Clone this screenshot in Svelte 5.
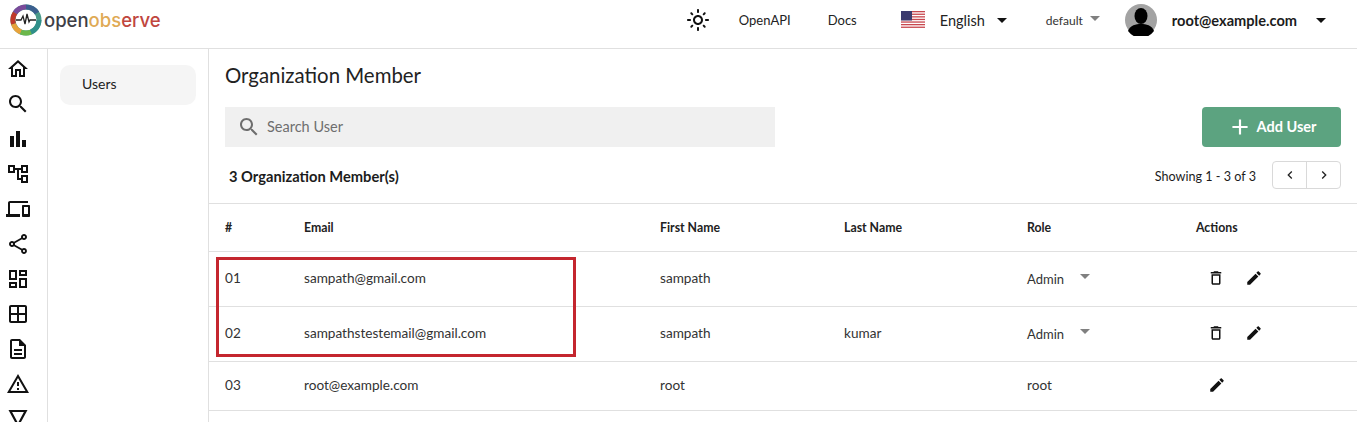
<script>
  const icons = [
    "M12 5.69l5 4.5V18h-2v-6H9v6H7v-7.81l5-4.5M12 3L2 12h3v8h6v-6h2v6h6v-8h3L12 3z",
    "M15.5 14h-.79l-.28-.27C15.41 12.59 16 11.11 16 9.5 16 5.91 13.09 3 9.5 3S3 5.91 3 9.5 5.91 16 9.5 16c1.61 0 3.09-.59 4.23-1.57l.27.28v.79l5 4.99L20.49 19l-4.99-5zm-6 0C7.01 14 5 11.99 5 9.5S7.01 5 9.5 5 14 7.01 14 9.5 11.99 14 9.5 14z",
    "M4 9h4v11H4zM10 4h4v16h-4zM16 13h4v7h-4z",
    "M22 11V3h-7v3H9V3H2v8h7V8h2v10h4v3h7v-8h-7v3h-2V8h2v3h7zM7 9H4V5h3v4zm10 6h3v4h-3v-4zm0-10h3v4h-3V5z",
    "M4 6h18V4H4c-1.1 0-2 .9-2 2v11H0v3h14v-3H4V6zm19 2h-6c-.55 0-1 .45-1 1v10c0 .55.45 1 1 1h6c.55 0 1-.45 1-1V9c0-.55-.45-1-1-1zm-1 9h-4v-7h4v7z",
    "M18 16.08c-.76 0-1.44.3-1.96.77L8.91 12.7c.05-.23.09-.46.09-.7s-.04-.47-.09-.7l7.05-4.11c.54.5 1.25.81 2.04.81 1.66 0 3-1.34 3-3s-1.34-3-3-3-3 1.34-3 3c0 .24.04.47.09.7L8.04 9.81C7.5 9.31 6.79 9 6 9c-1.66 0-3 1.34-3 3s1.34 3 3 3c.79 0 1.5-.31 2.04-.81l7.12 4.16c-.05.21-.08.43-.08.65 0 1.61 1.31 2.92 2.92 2.92 1.61 0 2.92-1.31 2.92-2.92s-1.31-2.92-2.92-2.92zM18 4c.55 0 1 .45 1 1s-.45 1-1 1-1-.45-1-1 .45-1 1-1zM6 13c-.55 0-1-.45-1-1s.45-1 1-1 1 .45 1 1-.45 1-1 1zm12 7.02c-.55 0-1-.45-1-1s.45-1 1-1 1 .45 1 1-.45 1-1 1z",
    "M19 5v2h-4V5h4M9 5v6H5V5h4m10 8v6h-4v-6h4M9 17v2H5v-2h4M21 3h-8v6h8V3zM11 3H3v10h8V3zm10 8h-8v10h8V11zm-10 4H3v6h8v-6z",
    "M19 3H5c-1.1 0-2 .9-2 2v14c0 1.1.9 2 2 2h14c1.1 0 2-.9 2-2V5c0-1.1-.9-2-2-2zm0 2v6h-6V5h6zM11 5v6H5V5h6zM5 19v-6h6v6H5zm8 0v-6h6v6h-6z",
    "M8 16h8v2H8zm0-4h8v2H8zm6-10H6c-1.1 0-2 .9-2 2v16c0 1.1.89 2 1.99 2H18c1.1 0 2-.9 2-2V8l-6-6zm4 18H6V4h7v5h5v11z",
    "M12 5.99L19.53 19H4.47L12 5.99M12 2L1 21h22L12 2zm1 14h-2v2h2v-2zm0-6h-2v4h2v-4z",
    "M2.5 3h19L12 20.5 2.5 3zm3.6 2L12 16l5.9-11H6.1z"
  ];
  const del = "M16 9v10H8V9h8m-1.5-6h-5l-1 1H5v2h14V4h-3.5l-1-1zM18 7H6v12c0 1.1.9 2 2 2h8c1.1 0 2-.9 2-2V7z";
  const edit = "M3 17.25V21h3.75L17.81 9.94l-3.75-3.75L3 17.25zM20.71 7.04c.39-.39.39-1.02 0-1.41l-2.34-2.34c-.39-.39-1.02-.39-1.41 0l-1.83 1.83 3.75 3.75 1.83-1.83z";
  const sun = "M12 9c1.65 0 3 1.35 3 3s-1.35 3-3 3-3-1.35-3-3 1.35-3 3-3m0-2c-2.76 0-5 2.24-5 5s2.24 5 5 5 5-2.24 5-5-2.24-5-5-5zM2 13h2c.55 0 1-.45 1-1s-.45-1-1-1H2c-.55 0-1 .45-1 1s.45 1 1 1zm18 0h2c.55 0 1-.45 1-1s-.45-1-1-1h-2c-.55 0-1 .45-1 1s.45 1 1 1zM11 2v2c0 .55.45 1 1 1s1-.45 1-1V2c0-.55-.45-1-1-1s-1 .45-1 1zm0 18v2c0 .55.45 1 1 1s1-.45 1-1v-2c0-.55-.45-1-1-1s-1 .45-1 1zM5.99 4.58c-.39-.39-1.03-.39-1.41 0-.39.39-.39 1.03 0 1.41l1.06 1.06c.39.39 1.03.39 1.41 0s.39-1.03 0-1.41L5.99 4.58zm12.37 12.37c-.39-.39-1.03-.39-1.41 0-.39.39-.39 1.03 0 1.41l1.06 1.06c.39.39 1.03.39 1.41 0 .39-.39.39-1.03 0-1.41l-1.06-1.06zm1.06-10.96c.39-.39.39-1.03 0-1.41-.39-.39-1.03-.39-1.41 0l-1.06 1.06c-.39.39-.39 1.03 0 1.41s1.03.39 1.41 0l1.06-1.06zM7.05 18.36c.39-.39.39-1.03 0-1.41-.39-.39-1.03-.39-1.41 0l-1.06 1.06c-.39.39-.39 1.03 0 1.41s1.03.39 1.41 0l1.06-1.06z";
  const search = icons[1];
  const rows = [
    { n: "01", email: "sampath@gmail.com", first: "sampath", last: "", role: "Admin", select: true, h: 55 },
    { n: "02", email: "sampathstestemail@gmail.com", first: "sampath", last: "kumar", role: "Admin", select: true, h: 55 },
    { n: "03", email: "root@example.com", first: "root", last: "", role: "root", select: false, h: 49 }
  ];
  const stripes = [0, 1, 2, 3, 4, 5, 6];
</script>

<div class="page">
  <header class="top">
    <div class="brand">
      <svg class="mark" viewBox="0 0 32 32" width="32" height="32" aria-hidden="true">
        <circle cx="16" cy="16" r="13" fill="none" stroke="#4a9a8a" stroke-width="5"/>
        <path d="M16 3A13 13 0 0 0 5 9" fill="none" stroke="#7a4a9a" stroke-width="5"/>
        <path d="M5 9A13 13 0 0 0 3.5 20" fill="none" stroke="#c0392b" stroke-width="5"/>
        <path d="M3.5 20A13 13 0 0 0 11 28" fill="none" stroke="#e8a23a" stroke-width="5"/>
        <path d="M11 28A13 13 0 0 0 21 28" fill="none" stroke="#6cb84a" stroke-width="5"/>
        <path d="M21 28A13 13 0 0 0 29 16" fill="none" stroke="#2f8f8a" stroke-width="5"/>
        <path d="M16 3A13 13 0 0 1 27 9" fill="none" stroke="#3b5f8f" stroke-width="5"/>
        <path d="M6 16h5l2-4 2 8 2-10 2 8 1-2h6" fill="none" stroke="#222" stroke-width="1.3"/>
      </svg>
      <span class="word"><span class="w1">open</span><span class="w2">obs</span><span class="w3">erve</span></span>
    </div>
    <div class="actions">
      <svg class="sun" viewBox="0 0 24 24" width="24" height="24" aria-hidden="true"><path d={sun}/></svg>
      <span class="link openapi">OpenAPI</span>
      <span class="link docs">Docs</span>
      <svg class="flag" viewBox="0 0 24 18" width="24" height="18" aria-hidden="true">
        <rect width="24" height="18" fill="#fff"/>
        {#each stripes as s}
          <rect y={s * 2.6} width="24" height="1.3" fill="#c8484f"/>
        {/each}
        <rect width="11" height="9.5" fill="#3c3b6e"/>
      </svg>
      <span class="lang">English</span>
      <span class="caret dark lang-caret"></span>
      <span class="org">default</span>
      <span class="caret grey org-caret"></span>
      <svg class="avatar" viewBox="0 0 32 32" width="32" height="32" aria-hidden="true">
        <circle cx="16" cy="16" r="16" fill="#a3a3a3"/>
        <ellipse cx="16" cy="12" rx="6.5" ry="8" fill="#000"/>
        <path d="M3 27c2-6 8-7 13-7s11 1 13 7a16 16 0 0 1-26 0z" fill="#000"/>
      </svg>
      <span class="user">root@example.com</span>
      <span class="caret dark user-caret"></span>
    </div>
  </header>

  <div class="body">
    <nav class="rail">
      {#each icons as d}
        <svg viewBox="0 0 24 24" width="24" height="24" aria-hidden="true"><path d={d}/></svg>
      {/each}
    </nav>
    <aside class="side">
      <div class="pill">Users</div>
    </aside>
    <main class="main">
      <h1>Organization Member</h1>
      <div class="tools">
        <div class="searchbox">
          <svg viewBox="0 0 24 24" width="24" height="24" aria-hidden="true"><path d={search}/></svg>
          <span>Search User</span>
        </div>
        <button class="add">
          <svg viewBox="0 0 24 24" width="26" height="26" aria-hidden="true"><path d="M19 13h-6v6h-2v-6H5v-2h6V5h2v6h6v2z"/></svg>
          <span>Add User</span>
        </button>
      </div>
      <div class="count">
        <strong>3 Organization Member(s)</strong>
        <div class="pager">
          <span class="showing">Showing 1 - 3 of 3</span>
          <div class="btns">
            <span class="pg"><svg viewBox="0 0 24 24" width="16" height="16" aria-hidden="true"><path d="M15.4 7.4L14 6l-6 6 6 6 1.4-1.4L10.8 12z"/></svg></span>
            <span class="pg"><svg viewBox="0 0 24 24" width="16" height="16" aria-hidden="true"><path d="M10 6L8.6 7.4 13.2 12l-4.6 4.6L10 18l6-6z"/></svg></span>
          </div>
        </div>
      </div>
      <div class="table">
        <div class="row head">
          <span>#</span><span>Email</span><span>First Name</span><span>Last Name</span><span>Role</span><span>Actions</span>
        </div>
        {#each rows as r}
          <div class="row item" style="height:{r.h}px">
            <span class="num">{r.n}</span>
            <span>{r.email}</span>
            <span>{r.first}</span>
            <span>{r.last}</span>
            {#if r.select}
              <span class="role"><span class="admin">Admin</span><span class="caret grey"></span></span>
            {:else}
              <span>{r.role}</span>
            {/if}
            <span class="acts" class:solo={!r.select}>
              {#if r.select}
                <svg viewBox="0 0 24 24" width="18" height="18" aria-hidden="true"><path d={del}/></svg>
              {/if}
              <svg viewBox="0 0 24 24" width="18" height="18" aria-hidden="true"><path d={edit}/></svg>
            </span>
          </div>
        {/each}
      </div>
    </main>
  </div>
  <div class="mark-box"></div>
</div>

<style>
  :global(body) { margin: 0; background: #fff; overflow: hidden; }
  .page { position: relative; width: 1357px; height: 422px; overflow: hidden; font-family: "Lato", "Noto Sans", sans-serif; color: #1c1c1c; }
  svg { display: block; flex: none; fill: currentColor; }

  .top { height: 48px; border-bottom: 1px solid #e0e0e0; display: flex; justify-content: space-between; }
  .brand { display: flex; align-items: flex-start; padding: 4px 0 0 10px; }
  .word { font-family: "Inter", sans-serif; font-size: 18.5px; font-weight: 500; line-height: 32px; margin-left: 2px; }
  .w1 { color: #3e3e46; } .w2 { color: #e0aa55; } .w3 { color: #c0463e; }
  .actions { display: flex; align-items: center; height: 40px; }
  .sun { margin-right: 29px; color: #111; }
  .link { font-size: 13px; color: #222; }
  .docs { margin-left: 37px; margin-right: 44px; }
  .lang { font-size: 14.5px; margin-left: 15px; color: #222; }
  .caret { display: inline-block; width: 0; height: 0; border-left: 5px solid transparent; border-right: 5px solid transparent; }
  .caret.dark { border-top: 5px solid #111; }
  .caret.grey { border-top: 5px solid #808080; }
  .lang-caret { margin-left: 12px; }
  .org { font-size: 12px; margin-left: 39px; color: #333; }
  .org-caret { margin-left: 7px; margin-top: -4px; }
  .avatar { margin-left: 25px; }
  .user { font-size: 14.6px; font-weight: 700; margin-left: 15px; }
  .user-caret { margin-left: 19px; margin-right: 31px; }

  .body { display: flex; height: 373px; }
  .rail { flex: none; border-right: 1px solid #e0e0e0; padding: 8px 0 0 6px; box-sizing: border-box; width: 48px; display: flex; flex-direction: column; gap: 11px; color: #111; }
  .side { width: 161px; flex: none; box-sizing: border-box; border-right: 1px solid #e0e0e0; padding: 16px 12px; }
  .pill { height: 40px; background: #f5f5f5; border-radius: 10px; padding-left: 22px; line-height: 38px; font-size: 14px; color: #222; }
  .main { flex: 1; min-width: 0; }
  h1 { margin: 0; font-size: 20.4px; font-weight: 400; line-height: 28px; padding: 12px 16px 0; color: #222; }
  .tools { display: flex; justify-content: space-between; padding: 18px 16px 0; }
  .searchbox { width: 550px; height: 40px; background: #f0f0f0; display: flex; align-items: center; color: #6e6e6e; font-size: 14.5px; padding-left: 12px; box-sizing: border-box; gap: 6px; }
  .searchbox span { padding-bottom: 2px; }
  .add { width: 139px; height: 40px; border: 0; border-radius: 4px; background: #5ca380; color: #fff; font: inherit; font-size: 14.5px; font-weight: 700; display: flex; align-items: center; justify-content: center; gap: 4px; padding: 0; }
  .add span { padding-bottom: 2px; }
  .count { height: 56px; display: flex; align-items: center; justify-content: space-between; padding: 0 16px 0 20px; font-size: 14.7px; }
  .count strong { padding-top: 1px; }
  .pager { display: flex; align-items: center; gap: 16px; }
  .showing { font-size: 12.6px; margin-top: 3px; }
  .btns { display: flex; border: 1px solid #d9d9d9; border-radius: 4px; height: 26px; width: 67px; }
  .pg { flex: 1; display: flex; align-items: center; justify-content: center; color: #222; }
  .pg + .pg { border-left: 1px solid #d9d9d9; }

  .table { border-top: 1px solid #e0e0e0; }
  .row { display: grid; grid-template-columns: 79px 356px 184px 183px 169px 1fr; padding-left: 16px; align-items: center; border-bottom: 1px solid #e0e0e0; box-sizing: border-box; font-size: 13.6px; color: #333; padding-bottom: 2px; }
  .head { height: 48px; font-weight: 700; font-size: 12.3px; color: #222; padding-bottom: 0; }
  .num { font-size: 13.6px; }
  .role { display: flex; align-items: center; gap: 16px; }
  .role .caret { margin-top: -4px; }
  .admin { margin-top: 2px; font-size: 13px; }
  .acts { display: flex; align-items: center; gap: 20px; padding-left: 11px; color: #111; }
  .solo { padding-left: 12px; }

  .mark-box { position: absolute; left: 216px; top: 257px; width: 360px; height: 100px; box-sizing: border-box; border: 3px solid #c4262e; }
</style>
